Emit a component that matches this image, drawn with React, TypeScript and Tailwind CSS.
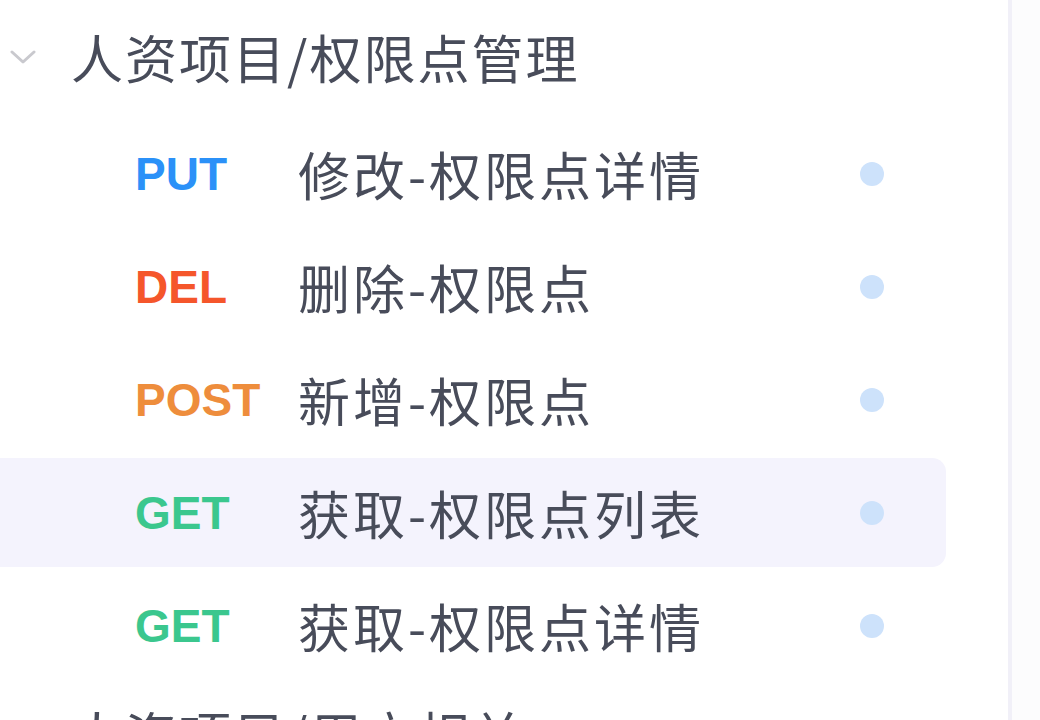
import React from "react";

type Item = { method: string; color: string; name: string; selected?: boolean };

const items: Item[] = [
  { method: "PUT", color: "text-[#2b91f8]", name: "修改-权限点详情" },
  { method: "DEL", color: "text-[#f5562b]", name: "删除-权限点" },
  { method: "POST", color: "text-[#ee8d3c]", name: "新增-权限点" },
  { method: "GET", color: "text-[#3bc78e]", name: "获取-权限点列表", selected: true },
  { method: "GET", color: "text-[#3bc78e]", name: "获取-权限点详情" },
];

const cjk = { fontFamily: '"Noto Sans CJK SC", "Noto Sans", sans-serif' };
const latin = { fontFamily: '"Liberation Sans", Arial, sans-serif' };

function Chevron() {
  return (
    <svg width="26" height="16" viewBox="0 0 26 16" fill="none" className="shrink-0">
      <path d="M2 3 L13 13 L24 3" stroke="#c9c9ce" strokeWidth="3" strokeLinecap="round" strokeLinejoin="round" />
    </svg>
  );
}

function Folder({ title, className }: { title: string; className?: string }) {
  return (
    <div className={"flex items-center shrink-0 " + (className ?? "")}>
      <div className="pl-[10px] w-[71px] shrink-0 flex">
        <Chevron />
      </div>
      <span
        className="text-[52px] leading-none tracking-[2px] text-[#484c5a] whitespace-nowrap"
        style={cjk}
      >
        {title}
      </span>
    </div>
  );
}

function Row({ item }: { item: Item }) {
  return (
    <div className="h-[113px] py-[2px] w-[946px] shrink-0">
      <div
        className={
          "h-full flex items-center rounded-r-[14px] " + (item.selected ? "bg-[#f4f3fd]" : "")
        }
      >
        <div className="w-[135px] shrink-0" />
        <span
          className={"w-[163px] shrink-0 text-[46px] font-bold leading-none " + item.color}
          style={latin}
        >
          {item.method}
        </span>
        <span
          className="flex-1 text-[52px] leading-none tracking-[3px] text-[#484c5a] whitespace-nowrap"
          style={cjk}
        >
          {item.name}
        </span>
        <div className="w-[24px] h-[24px] rounded-full bg-[#cde2fb] mr-[62px] shrink-0" />
      </div>
    </div>
  );
}

export default function App() {
  return (
    <div className="w-[1040px] h-[720px] overflow-hidden bg-white flex">
      <div className="w-[1008px] shrink-0 flex flex-col pt-[2px] overflow-hidden">
        <Folder title="人资项目/权限点管理" className="h-[115px] pb-[6px]" />
        {items.map((it, i) => (
          <Row key={i} item={it} />
        ))}
        <Folder title="人资项目/用户相关" className="h-[100px] mt-[2px]" />
      </div>
      <div className="w-[4px] shrink-0 bg-[#f1f0f8]" />
      <div className="flex-1 bg-[#fcfcfd]" />
    </div>
  );
}
